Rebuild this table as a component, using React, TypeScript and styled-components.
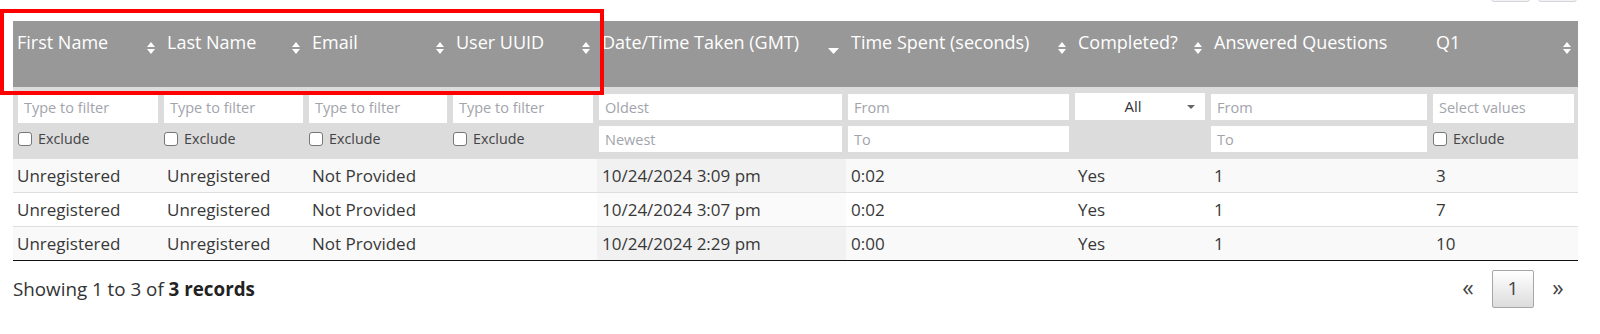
import styled, { createGlobalStyle } from "styled-components";

const GlobalStyle = createGlobalStyle`
  body {
    margin: 0;
    background: #fff;
    font-family: "Open Sans", "Liberation Sans", sans-serif;
    color: #333;
  }
`;

type SortKind = "both" | "desc" | "none";
type FilterKind = "text" | "range" | "select" | "multi";

type Column = {
  title: string;
  width: number;
  sort: SortKind;
  filter: FilterKind;
  from?: string;
  to?: string;
};

const columns: Column[] = [
  { title: "First Name", width: 149, sort: "both", filter: "text" },
  { title: "Last Name", width: 145, sort: "both", filter: "text" },
  { title: "Email", width: 144, sort: "both", filter: "text" },
  { title: "User UUID", width: 146, sort: "both", filter: "text" },
  { title: "Date/Time Taken (GMT)", width: 249, sort: "desc", filter: "range", from: "Oldest", to: "Newest" },
  { title: "Time Spent (seconds)", width: 227, sort: "both", filter: "range", from: "From", to: "To" },
  { title: "Completed?", width: 136, sort: "both", filter: "select" },
  { title: "Answered Questions", width: 222, sort: "none", filter: "range", from: "From", to: "To" },
  { title: "Q1", width: 147, sort: "both", filter: "multi" },
];

const rows = [
  ["Unregistered", "Unregistered", "Not Provided", "", "10/24/2024 3:09 pm", "0:02", "Yes", "1", "3"],
  ["Unregistered", "Unregistered", "Not Provided", "", "10/24/2024 3:07 pm", "0:02", "Yes", "1", "7"],
  ["Unregistered", "Unregistered", "Not Provided", "", "10/24/2024 2:29 pm", "0:00", "Yes", "1", "10"],
];

const SORTED_COL = 4;

const Page = styled.div`
  position: relative;
  display: flow-root;
  padding: 0 22px 0 13px;
`;

const Toolbar = styled.div`
  display: flex;
  justify-content: flex-end;
  gap: 8px;
  margin-top: -30px;
  padding-right: 1px;
  height: 32px;
`;

const ToolButton = styled.button`
  width: 39px;
  height: 32px;
  border: 1px solid #d4d4da;
  border-radius: 3px;
  background: #f3f3f6;
`;

const Table = styled.table`
  margin-top: 19px;
  width: 1565px;
  table-layout: fixed;
  border-collapse: collapse;
  border-bottom: 1px solid #111;
`;

const HeadCell = styled.th`
  height: 66px;
  padding: 0;
  background: #989898;
  vertical-align: top;
  text-align: left;
  font-weight: 400;
  font-size: 18px;
  line-height: 24px;
  color: #fff;
`;

const HeadInner = styled.div<{ $first?: boolean }>`
  display: flex;
  justify-content: space-between;
  align-items: flex-start;
  padding: 9px 7px 0 ${(p) => (p.$first ? 4 : 5)}px;
  white-space: nowrap;
`;

const SortIcon = styled.svg<{ $desc?: boolean }>`
  flex: none;
  margin-top: ${(p) => (p.$desc ? 18 : 12)}px;
  fill: #fff;
`;

const FilterCell = styled.td<{ $first?: boolean }>`
  box-sizing: border-box;
  height: 71px;
  padding: 7px 4px 0 ${(p) => (p.$first ? 5 : 2)}px;
  background: #dcdcdc;
  vertical-align: top;
`;

const TextInput = styled.input<{ $tall?: boolean }>`
  display: block;
  box-sizing: border-box;
  width: 100%;
  height: ${(p) => (p.$tall ? 29 : 26)}px;
  margin: 0;
  padding: ${(p) => (p.$tall ? "0 6px 3px" : "0 6px")};
  border: none;
  background: #fff;
  font-family: "Open Sans", "Liberation Sans", sans-serif;
  font-size: 14.5px;
  color: #333;
  outline: none;
  &::placeholder {
    color: #a2a4ac;
  }
`;

const RangeStack = styled.div`
  display: flex;
  flex-direction: column;
  gap: 6px;
`;

const SelectBox = styled.div`
  position: relative;
  box-sizing: border-box;
  height: 27px;
  margin-top: -1px;
  padding-right: 14px;
  background: #fff;
  text-align: center;
  font-size: 15px;
  line-height: 27px;
  color: #333;
`;

const Caret = styled.span`
  position: absolute;
  right: 10px;
  top: 12px;
  width: 0;
  height: 0;
  border-left: 4px solid transparent;
  border-right: 4px solid transparent;
  border-top: 4px solid #666;
`;

const ExcludeLabel = styled.label`
  display: flex;
  align-items: center;
  gap: 6px;
  margin-top: 8px;
  font-size: 14.3px;
  line-height: 16px;
  color: #444;
`;

const Check = styled.input`
  appearance: none;
  margin: 0;
  width: 14px;
  height: 14px;
  border: 1px solid #767676;
  border-radius: 3px;
  background: #fff;
`;

const BodyCell = styled.td<{ $odd: boolean; $sorted: boolean; $first?: boolean }>`
  height: 33px;
  padding: 0 5px 0 ${(p) => (p.$first ? 4 : 5)}px;
  border-top: 1px solid #dedede;
  background: ${(p) =>
    p.$sorted ? (p.$odd ? "#f1f1f1" : "#fafafa") : p.$odd ? "#f9f9f9" : "#fff"};
  font-size: 17px;
  color: #383838;
  white-space: nowrap;
`;

const Footer = styled.div`
  display: flex;
  justify-content: space-between;
  align-items: center;
  margin-top: 9px;
`;

const Info = styled.div`
  font-size: 18.8px;
  color: #333;
  b {
    font-weight: 700;
    color: #222;
  }
`;

const Pager = styled.div`
  display: flex;
  gap: 3px;
  margin-right: -1px;
`;

const PageItem = styled.span<{ $active?: boolean }>`
  box-sizing: border-box;
  display: flex;
  align-items: center;
  justify-content: center;
  width: 42px;
  height: 38px;
  font-size: ${(p) => (p.$active ? 19 : 23)}px;
  line-height: 1;
  padding-bottom: ${(p) => (p.$active ? 0 : 3)}px;
  color: #444;
  border: 1px solid ${(p) => (p.$active ? "#a6a6a6" : "transparent")};
  border-radius: 2px;
  background: ${(p) => (p.$active ? "linear-gradient(#fff, #dcdcdc)" : "transparent")};
`;

const Highlight = styled.div`
  position: absolute;
  top: 9px;
  left: 0;
  width: 604px;
  height: 86px;
  box-sizing: border-box;
  border: 4px solid #f00;
  pointer-events: none;
`;

function Sort({ kind }: { kind: SortKind }) {
  if (kind === "none") return null;
  if (kind === "desc")
    return (
      <SortIcon $desc width="11" height="6" viewBox="0 0 11 6">
        <path d="M0 0H11L5.5 6Z" />
      </SortIcon>
    );
  return (
    <SortIcon width="8" height="12" viewBox="0 0 8 12">
      <path d="M4 0L8 5H0Z" />
      <path d="M0 7H8L4 12Z" />
    </SortIcon>
  );
}

function Exclude() {
  return (
    <ExcludeLabel>
      <Check type="checkbox" />
      Exclude
    </ExcludeLabel>
  );
}

function Filter({ col }: { col: Column }) {
  if (col.filter === "text")
    return (
      <>
        <TextInput $tall placeholder="Type to filter" />
        <Exclude />
      </>
    );
  if (col.filter === "multi")
    return (
      <>
        <TextInput $tall placeholder="Select values" />
        <Exclude />
      </>
    );
  if (col.filter === "select")
    return (
      <SelectBox>
        All
        <Caret />
      </SelectBox>
    );
  return (
    <RangeStack>
      <TextInput placeholder={col.from} />
      <TextInput placeholder={col.to} />
    </RangeStack>
  );
}

export default function App() {
  return (
    <Page>
      <GlobalStyle />
      <Toolbar>
        <ToolButton />
        <ToolButton />
      </Toolbar>
      <Table>
        <colgroup>
          {columns.map((c) => (
            <col key={c.title} style={{ width: c.width }} />
          ))}
        </colgroup>
        <thead>
          <tr>
            {columns.map((c, i) => (
              <HeadCell key={c.title}>
                <HeadInner $first={i === 0}>
                  <span>{c.title}</span>
                  <Sort kind={c.sort} />
                </HeadInner>
              </HeadCell>
            ))}
          </tr>
          <tr>
            {columns.map((c, i) => (
              <FilterCell key={c.title} $first={i === 0}>
                <Filter col={c} />
              </FilterCell>
            ))}
          </tr>
        </thead>
        <tbody>
          {rows.map((r, ri) => (
            <tr key={ri}>
              {r.map((v, ci) => (
                <BodyCell key={ci} $odd={ri % 2 === 0} $sorted={ci === SORTED_COL} $first={ci === 0}>
                  {v}
                </BodyCell>
              ))}
            </tr>
          ))}
        </tbody>
      </Table>
      <Footer>
        <Info>
          Showing 1 to 3 of <b>3 records</b>
        </Info>
        <Pager>
          <PageItem>«</PageItem>
          <PageItem $active>1</PageItem>
          <PageItem>»</PageItem>
        </Pager>
      </Footer>
      <Highlight />
    </Page>
  );
}
